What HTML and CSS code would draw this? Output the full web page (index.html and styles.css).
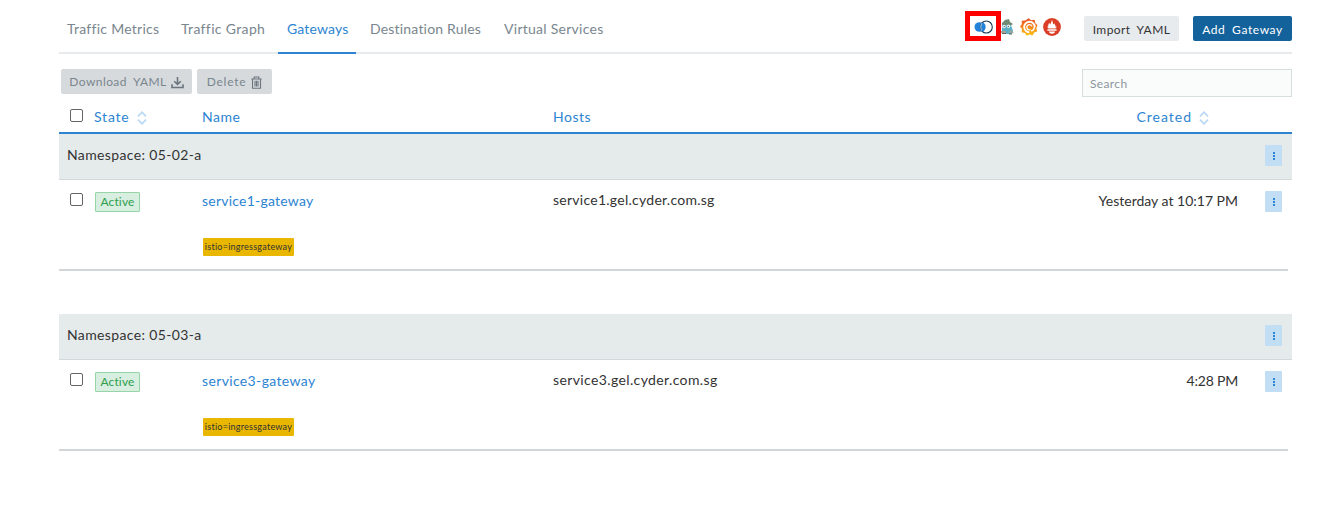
FILE: index.html
```html
<!DOCTYPE html>
<html lang="en">
<head>
<meta charset="utf-8">
<title>Gateways</title>
<link rel="stylesheet" href="styles.css">
</head>
<body>
<svg width="0" height="0" class="defs">
  <defs>
    <symbol id="sort" viewBox="0 0 10 14"><path d="M1 5.3 5 1.2 9 5.3M1 8.7 5 12.8 9 8.7" fill="none" stroke="#b9d8f5" stroke-width="1.7"/></symbol>
    <linearGradient id="grafana" x1="0" y1="1" x2="0" y2="0"><stop offset="0" stop-color="#fbc212"/><stop offset=".55" stop-color="#f58220"/><stop offset="1" stop-color="#ec4a27"/></linearGradient>
  </defs>
</svg>
<main class="page">
  <header class="topbar">
    <nav class="tabs">
      <a class="tab t-metrics"><span>Traffic Metrics</span></a>
      <a class="tab t-graph"><span>Traffic Graph</span></a>
      <a class="tab t-gateways active"><span>Gateways</span></a>
      <a class="tab t-rules"><span>Destination Rules</span></a>
      <a class="tab t-services"><span>Virtual Services</span></a>
    </nav>
    <div class="links">
      <span class="highlight"><svg width="19" height="14" viewBox="0 0 19 14"><ellipse cx="5.5" cy="7" rx="5" ry="4.8" fill="#2382da"/><circle cx="12.3" cy="7" r="6" fill="#fff" stroke="#173b55" stroke-width="1.1"/><path d="M8.9 2.2A5.6 5.6 0 0 1 8.9 11.8 7 7 0 0 1 8.9 2.2" fill="#2382da"/><path d="M7.6 2.8Q5.4 7 7.6 11.2" fill="none" stroke="#b9dbf5" stroke-width=".7"/></svg></span>
      <svg class="jaeger" width="14" height="16" viewBox="0 0 14 16"><path d="M2 4 5 1l4-1 1 3 3 2-3 2-8-1z" fill="#708a73"/><path d="M2 6h9l2 6-1 3H2z" fill="#5dafc3"/><circle cx="4" cy="7.5" r="1.8" fill="#e6f0ed"/><circle cx="8.5" cy="7.3" r="1.8" fill="#e6f0ed"/><circle cx="4.2" cy="7.5" r=".6" fill="#304a4f"/><circle cx="8.3" cy="7.3" r=".6" fill="#304a4f"/><path d="M0 12h6v2H0zM10 11l4 3h-5z" fill="#a4a197"/><path d="M2 14.5h4M9 15h3" stroke="#536d65"/></svg>
      <svg class="grafana" width="18" height="18" viewBox="0 0 18 18"><path d="m8.8.2 2.3 2 3.5-.4.6 3.3 2.4 2.2-1.3 2.9.9 3.2-3.1 1.1-1.4 3-3.1-.9-3 1.2-1.6-2.8-3.4-.8.4-3.2L0 8.5 1.9 6 1.7 2.8l3.4-.2z" fill="url(#grafana)"/><path d="M14.8 9.2A5.3 5.3 0 1 0 9.3 14.4" fill="none" stroke="#fff" stroke-width="1.9"/><path d="M14.2 8.5c.3 2.4-1 4-3 4.5" fill="none" stroke="#fff" stroke-width="1.3"/><path d="M11.9 8.3a2.6 2.6 0 1 0-1.5 3.4" fill="none" stroke="#fff" stroke-width="1.3"/></svg>
      <svg class="prometheus" width="18" height="18" viewBox="0 0 18 18"><circle cx="9" cy="9" r="8.9" fill="#db3d27"/><path d="M5.7 10.5 3.8 8.5l1.4.3C4.8 6.8 6 5.8 6.1 4.7L7.4 6.5 9 1.8l1.3 4.7 1.2-1.3c0 1.5 1.4 2 1.1 3.7l1.6-.4-1.9 2zM4.4 11.2h9.2v1.5H4.4zM6 13.5h6c-.2 3-5.8 3-6 0z" fill="#fff"/></svg>
    </div>
    <button class="btn import"><span>Import YAML</span></button>
    <button class="btn add"><span>Add Gateway</span></button>
  </header>
  <div class="tools">
    <button class="btn off download"><span>Download YAML</span><svg width="13" height="13" viewBox="0 0 13 13"><path d="M6.5 1v7M3.2 5.3 6.5 8.5 9.8 5.3M1 8.3v3.2h11V8.3" fill="none" stroke="#6c757d" stroke-width="1.6"/></svg></button>
    <button class="btn off delete"><span>Delete</span><svg width="11" height="13" viewBox="0 0 11 13"><path d="M.3 3h10.4M3.2 2.7V1h4.6v1.7M1.5 3v9.2h8V3M4 4.8v5.7M5.5 4.8v5.7M7 4.8v5.7" fill="none" stroke="#6c757d" stroke-width="1.1"/></svg></button>
    <input class="search" placeholder="Search">
  </div>
  <section class="table">
    <div class="row head">
      <i class="check"></i>
      <div class="cell"><span class="h-state">State</span><svg class="sort" width="10" height="14"><use href="#sort"/></svg></div>
      <div class="cell"><span class="h-name">Name</span></div>
      <div class="cell"><span class="h-hosts">Hosts</span></div>
      <div class="cell right"><span class="h-created">Created</span><svg class="sort" width="10" height="14"><use href="#sort"/></svg></div>
    </div>
    <div class="group"><span class="ns">Namespace: 05-02-a</span><b class="more"><i></i></b></div>
    <div class="row item">
      <i class="check"></i>
      <div class="cell"><span class="badge"><span>Active</span></span></div>
      <div class="cell name"><a class="n1">service1-gateway</a><em class="tag"><span>istio=ingressgateway</span></em></div>
      <div class="cell host"><span class="host1">service1.gel.cyder.com.sg</span></div>
      <div class="cell right date"><span class="d1">Yesterday at 10:17 PM</span></div>
      <b class="more"><i></i></b>
    </div>
    <div class="group second"><span class="ns">Namespace: 05-03-a</span><b class="more"><i></i></b></div>
    <div class="row item">
      <i class="check"></i>
      <div class="cell"><span class="badge"><span>Active</span></span></div>
      <div class="cell name"><a class="n2">service3-gateway</a><em class="tag"><span>istio=ingressgateway</span></em></div>
      <div class="cell host"><span class="host2">service3.gel.cyder.com.sg</span></div>
      <div class="cell right date"><span class="d2">4:28 PM</span></div>
      <b class="more"><i></i></b>
    </div>
  </section>
</main>
</body>
</html>
```
FILE: styles.css
```css
* { box-sizing: border-box; }
body { margin: 0; background: #fff; color: #333; font: 14px/20px Lato, "Liberation Sans", sans-serif; }
i, em { font-style: normal; }
.defs { display: block; }
.page { width: 1233px; margin-left: 59px; }
.topbar { display: flex; height: 54px; border-bottom: 2px solid #e8ebee; }
.tabs { display: flex; gap: 5px; height: 54px; }
.tab { padding: 19px 0 0 9px; color: #7a868e; white-space: nowrap; letter-spacing: .27px; }
.t-metrics { width: 108px; padding-left: 8px; }
.t-graph { width: 101px; letter-spacing: .35px; }
.t-gateways { width: 78px; letter-spacing: .16px; }
.t-rules { width: 129px; letter-spacing: .19px; }
.t-services { width: 117px; }
.active { color: #2d84d2; border-bottom: 2px solid #2d84d2; }
.links { display: flex; align-items: flex-start; margin-left: auto; width: 119px; }
.highlight { position: relative; z-index: 1; width: 36px; height: 30px; margin-top: 11px; border: 5px solid #fe0000; display: flex; align-items: center; justify-content: center; }
.highlight svg { margin-top: 2px; }
.jaeger { margin: 19px 0 0 -1px; }
.grafana { margin: 18px 0 0 6px; }
.prometheus { margin: 18px 0 0 5px; }
.btn { height: 25px; padding: 2px 0 0; border: 0; border-radius: 2px; display: flex; align-items: center; justify-content: center; font: 12px/18px Lato, sans-serif; white-space: nowrap; letter-spacing: .42px; word-spacing: 3px; }
.import { width: 95px; margin-top: 16px; background: #e8ebee; color: #333; }
.add { width: 99px; margin: 16px 0 0 14px; background: #13629b; color: #fff; letter-spacing: .6px; }
.tools { display: flex; padding: 15px 0 0 2px; height: 51px; gap: 5px; }
.off { padding-top: 1px; background: #d6dadd; color: #7a868e; gap: 4px; }
.download { width: 131px; }
.delete { width: 75px; letter-spacing: .73px; gap: 5px; }
.search { width: 210px; height: 28px; margin-left: auto; padding: 0 7px; border: 1px solid #d5dfdf; border-radius: 0; background: #fafcfc; font: 12px Lato, sans-serif; letter-spacing: .35px; }
.search::placeholder { color: #8c959b; }
.row { display: grid; grid-template-columns: 35px 108px 351px 400px 285px 54px; }
.cell { white-space: nowrap; }
.head { height: 29px; border-bottom: 2px solid #2d84d2; color: #2d84d2; letter-spacing: .5px; }
.head .cell { display: flex; align-items: center; height: 20px; margin-top: 2px; }
.head .check { margin-top: 4px; }
.head .right { width: 256px; }
.h-state { letter-spacing: .8px; }
.h-created { letter-spacing: .98px; }
.right { display: flex; justify-content: flex-end; }
.sort { margin: 2px 0 0 7px; }
.check { width: 13px; height: 13px; margin-left: 11px; border: 1px solid #646464; border-radius: 2px; background: #fff; }
.group { display: flex; justify-content: space-between; height: 46px; padding: 11px 10px 0 8px; border-bottom: 1px solid #d3d9da; background: #e5ebeb; letter-spacing: .36px; }
.second { margin-top: 43px; }
.item { width: 1229px; height: 91px; border-bottom: 2px solid #d3d6d9; grid-template-columns: 35px 108px 351px 400px 285px 50px; padding-top: 11px; }
.item .check { margin-top: 2px; }
.more { width: 17px; height: 21px; border-radius: 1px; background: #c2def5; display: flex; justify-content: center; padding-top: 7px; }
.more i { width: 2px; height: 2px; background: #2d84d2; box-shadow: 0 3px #2d84d2, 0 6px #2d84d2; }
.item .more { margin-left: 27px; }
.badge { display: flex; justify-content: center; width: 45px; height: 20px; margin: 1px 0 0 1px; border: 1px solid #97d5a9; border-radius: 1px; background: #d8eee0; color: #2f9e4e; font-size: 12px; line-height: 18px; letter-spacing: .15px; }
.name { display: flex; flex-direction: column; align-items: flex-start; color: #2d84d2; }
.n1 { letter-spacing: .23px; }
.n2 { letter-spacing: .36px; }
.host { margin-top: -1px; }
.host1 { letter-spacing: .26px; }
.host2 { letter-spacing: .38px; }
.d2 { letter-spacing: -.19px; }
.tag { width: 91px; height: 18px; margin: 27px 0 0 1px; border-radius: 1px; background: #eab700; color: #333; text-align: center; font-size: 9px; line-height: 18px; letter-spacing: .25px; }
```
